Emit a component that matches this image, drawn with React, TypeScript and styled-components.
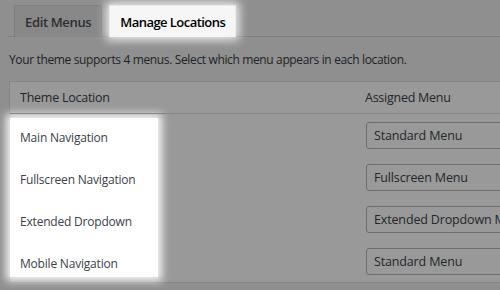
import React from "react";
import styled, { createGlobalStyle } from "styled-components";

const Global = createGlobalStyle`
  html, body { margin: 0; padding: 0; }
  body {
    background: #8f8f8f;
    font-family: "Open Sans", "Noto Sans", sans-serif;
    overflow: hidden;
    width: 500px;
    height: 290px;
  }
`;

const Wrap = styled.div`
  padding: 5px 0 0 9px;
  width: 700px;
`;

const TabBar = styled.div`
  display: flex;
  gap: 7px;
  padding-left: 6px;
  border-bottom: 1px solid #7e7e7e;
  height: 31px;
  align-items: flex-end;
  margin-left: -1px;
`;

const Tab = styled.div<{ $active?: boolean }>`
  box-sizing: border-box;
  padding: 0 10px;
  display: flex;
  align-items: center;
  font-size: 13px;
  font-weight: 600;
  letter-spacing: ${(p) => (p.$active ? "-0.55px" : "-0.35px")};
  border: 1px solid ${(p) => (p.$active ? "#e8e8e8" : "#7e7e7e")};
  border-bottom: none;
  background: ${(p) => (p.$active ? "#f6f6f6" : "#888888")};
  color: ${(p) => (p.$active ? "#000" : "#2c2f31")};
  box-shadow: ${(p) => (p.$active ? "0 0 9px 3px rgba(255,255,255,0.85)" : "none")};
  margin-bottom: -1px;
  height: 32px;
  position: relative;
  z-index: ${(p) => (p.$active ? 1 : 0)};
`;

const Desc = styled.p`
  margin: 14px 0 12px;
  font-size: 12px;
  letter-spacing: -0.36px;
  color: #202326;
  line-height: 18px;
`;

const TableBox = styled.div`
  position: relative;
  border: 1px solid #858585;
  background: #999999;
  width: 600px;
`;

const Spotlight = styled.div`
  position: absolute;
  left: 0;
  top: 36px;
  width: 148px;
  height: 159px;
  background: #ffffff;
  box-shadow: 0 0 8px 4px rgba(255, 255, 255, 0.9);
`;

const Table = styled.table`
  position: relative;
  border-collapse: collapse;
  width: 100%;
`;

const HeadCell = styled.th`
  text-align: left;
  font-weight: 400;
  font-size: 12.5px;
  letter-spacing: -0.25px;
  color: #23272a;
  height: 31px;
  padding: 0 10px;
  border-bottom: 1px solid #858585;
  &:first-child { width: 325px; }
`;

const LabelCell = styled.td`
  height: 42px;
  padding: 5px 10px 0;
  font-size: 12px;
  letter-spacing: -0.2px;
  line-height: 20px;
  box-sizing: border-box;
  color: #3a4148;
  vertical-align: middle;
`;

const MenuCell = styled.td`
  height: 42px;
  padding: 0 10px 0 11px;
  vertical-align: middle;
`;

const Select = styled.div`
  width: 200px;
  height: 27px;
  box-sizing: border-box;
  border: 1px solid #6d6d6d;
  border-radius: 3px;
  padding: 0 7px;
  display: flex;
  align-items: center;
  font-size: 12.5px;
  letter-spacing: -0.15px;
  color: #23272a;
  white-space: nowrap;
  overflow: hidden;
  background: #999999;
`;

const rows = [
  ["Main Navigation", "Standard Menu"],
  ["Fullscreen Navigation", "Fullscreen Menu"],
  ["Extended Dropdown", "Extended Dropdown Menu"],
  ["Mobile Navigation", "Standard Menu"],
];

export default function App() {
  return (
    <>
      <Global />
      <Wrap>
        <TabBar>
          <Tab>Edit Menus</Tab>
          <Tab $active>Manage Locations</Tab>
        </TabBar>
        <Desc>Your theme supports 4 menus. Select which menu appears in each location.</Desc>
        <TableBox>
          <Spotlight />
          <Table>
            <thead>
              <tr>
                <HeadCell>Theme Location</HeadCell>
                <HeadCell>Assigned Menu</HeadCell>
              </tr>
            </thead>
            <tbody>
              {rows.map(([loc, menu]) => (
                <tr key={loc}>
                  <LabelCell>{loc}</LabelCell>
                  <MenuCell>
                    <Select>{menu}</Select>
                  </MenuCell>
                </tr>
              ))}
            </tbody>
          </Table>
        </TableBox>
      </Wrap>
    </>
  );
}
